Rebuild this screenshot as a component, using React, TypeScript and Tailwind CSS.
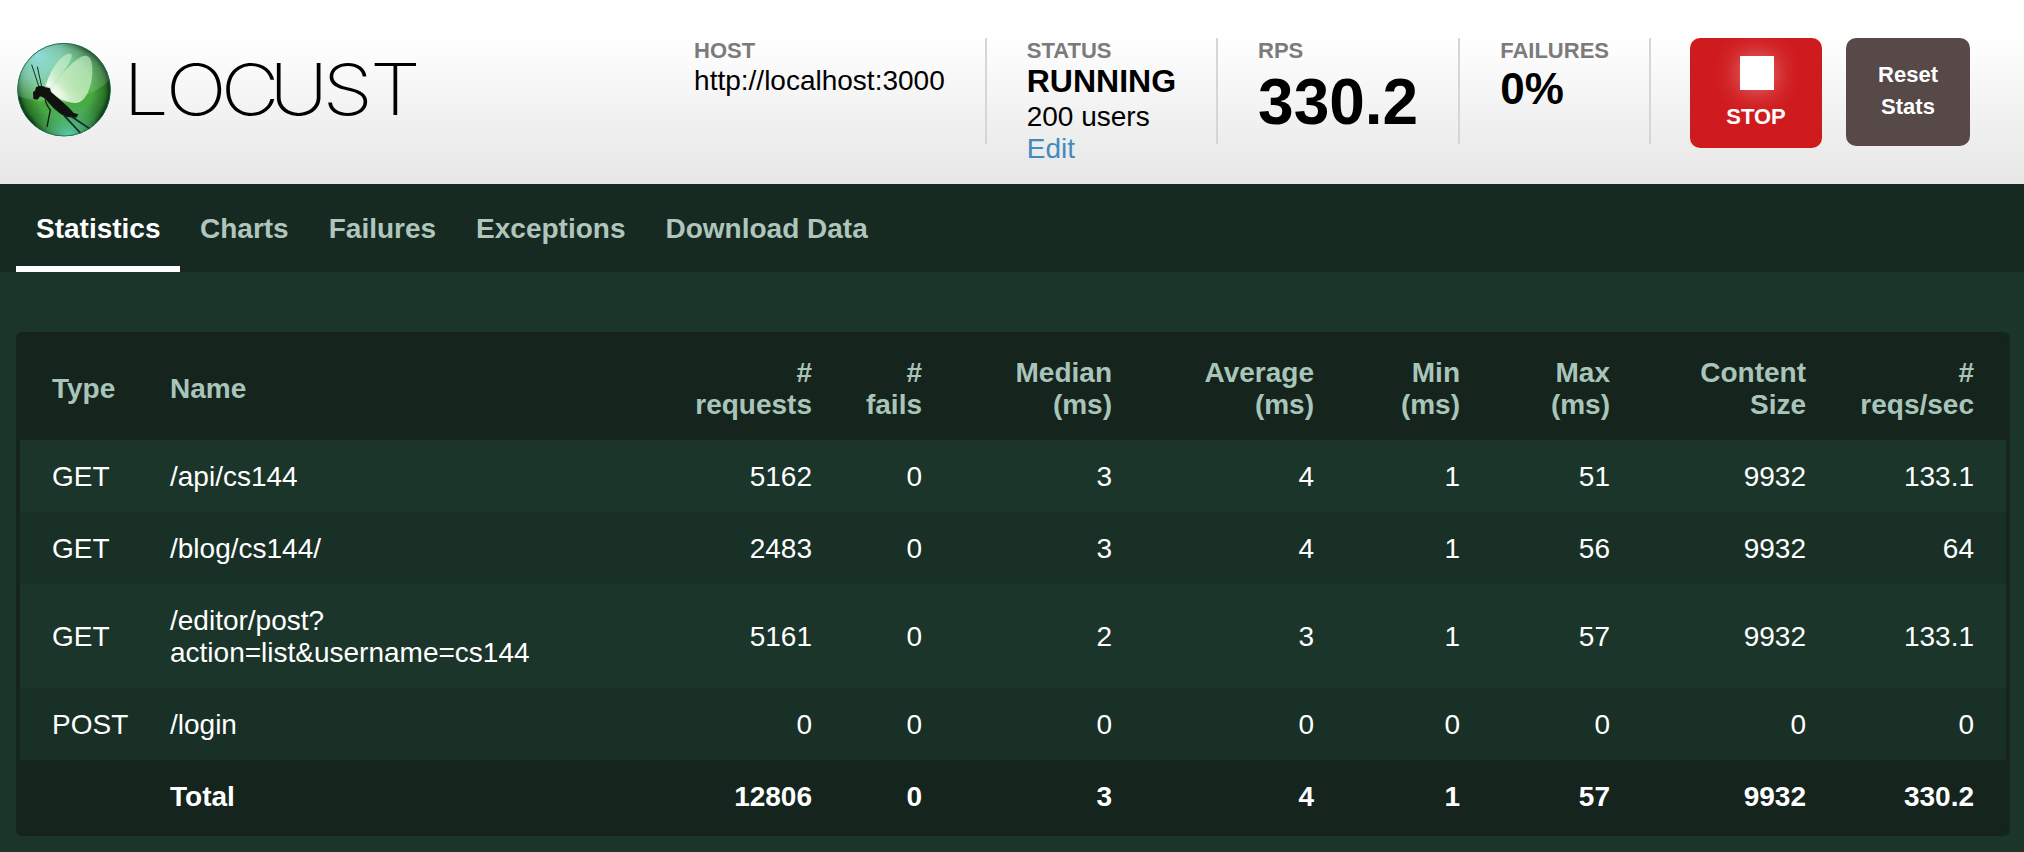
import type { ReactNode } from 'react'

type Row = { type: string; name: ReactNode; values: string[] }

const tabs = ['Statistics', 'Charts', 'Failures', 'Exceptions', 'Download Data']

const columns = [
  ['#', 'requests'],
  ['#', 'fails'],
  ['Median', '(ms)'],
  ['Average', '(ms)'],
  ['Min', '(ms)'],
  ['Max', '(ms)'],
  ['Content', 'Size'],
  ['#', 'reqs/sec'],
]

const rows: Row[] = [
  { type: 'GET', name: '/api/cs144', values: ['5162', '0', '3', '4', '1', '51', '9932', '133.1'] },
  { type: 'GET', name: '/blog/cs144/', values: ['2483', '0', '3', '4', '1', '56', '9932', '64'] },
  {
    type: 'GET',
    name: (
      <>
        /editor/post?
        <br />
        action=list&amp;username=cs144
      </>
    ),
    values: ['5161', '0', '2', '3', '1', '57', '9932', '133.1'],
  },
  { type: 'POST', name: '/login', values: ['0', '0', '0', '0', '0', '0', '0', '0'] },
]

const totals = ['12806', '0', '3', '4', '1', '57', '9932', '330.2']

function LocustMark() {
  return (
    <svg className="h-24 w-24 shrink-0" viewBox="18 18 288 288">
      <defs>
        <linearGradient id="base" x1="0.3" y1="0" x2="0.55" y2="1">
          <stop offset="0" stopColor="#7cc9b0" />
          <stop offset="0.3" stopColor="#63b873" />
          <stop offset="0.6" stopColor="#47a93a" />
          <stop offset="1" stopColor="#48a85e" />
        </linearGradient>
        <radialGradient id="shade" cx="0.5" cy="0.5" r="0.5">
          <stop offset="0.6" stopColor="#0b3a10" stopOpacity="0" />
          <stop offset="0.88" stopColor="#0a3a12" stopOpacity="0.5" />
          <stop offset="1" stopColor="#03200a" stopOpacity="0.95" />
        </radialGradient>
        <radialGradient id="sky" cx="0.22" cy="0.14" r="0.5">
          <stop offset="0" stopColor="#84d8dc" />
          <stop offset="0.5" stopColor="#7ccfb6" stopOpacity="0.75" />
          <stop offset="1" stopColor="#6cc080" stopOpacity="0" />
        </radialGradient>
        <radialGradient id="pool" cx="0.55" cy="1" r="0.42">
          <stop offset="0" stopColor="#63cdb4" />
          <stop offset="0.5" stopColor="#4fb56c" stopOpacity="0.7" />
          <stop offset="1" stopColor="#49b045" stopOpacity="0" />
        </radialGradient>
        <radialGradient id="glow" cx="0.5" cy="0.5" r="0.5">
          <stop offset="0" stopColor="#fff" />
          <stop offset="0.3" stopColor="#fff" stopOpacity="0.75" />
          <stop offset="1" stopColor="#fff" stopOpacity="0" />
        </radialGradient>
        <linearGradient id="wing" x1="0.1" y1="1" x2="0.9" y2="0.1">
          <stop offset="0" stopColor="#fff" stopOpacity="0.9" />
          <stop offset="0.45" stopColor="#d3f2ca" stopOpacity="0.78" />
          <stop offset="1" stopColor="#c4edc4" stopOpacity="0.65" />
        </linearGradient>
        <clipPath id="ball">
          <circle cx="162" cy="161" r="140" />
        </clipPath>
      </defs>
      <g clipPath="url(#ball)">
        <circle cx="162" cy="161" r="140" fill="url(#base)" />
        <circle cx="162" cy="161" r="140" fill="url(#shade)" />
        <circle cx="162" cy="161" r="140" fill="url(#sky)" />
        <circle cx="162" cy="161" r="140" fill="url(#pool)" />
        <path d="M15 176 Q90 206 170 192 Q258 178 302 128 V10 H15 Z" fill="#d5ffe0" fillOpacity="0.16" />
        <ellipse cx="138" cy="168" rx="50" ry="27" fill="url(#glow)" transform="rotate(38 138 168)" />
        <path d="M108 150 C114 116 148 58 175 53 C189 51 187 63 179 77 C165 103 142 132 122 154 Z" fill="url(#wing)" />
        <path d="M122 158 C148 120 184 78 214 62 C234 53 246 66 247 96 C248 150 228 203 195 201 C172 200 152 190 138 180 Z" fill="url(#wing)" />
        <path d="M88 156 L65 86 M95 152 L82 92" fill="none" stroke="#16302a" strokeWidth="3" />
        <path d="M70 189 L69 168 L75 164 L78 154 C86 149 99 149 106 154 L120 157 L123 168 C148 190 178 214 191 231 L205 235 L199 245 L172 243 C150 238 128 214 109 192 C101 184 94 180 89 182 L83 191 Z" fill="#101210" />
        <path d="M105 190 Q112 212 121 222 L111 273" fill="none" stroke="#161b16" strokeWidth="4" />
        <path d="M162 238 L214 294 M182 240 L242 280" fill="none" stroke="#14252f" strokeWidth="5" />
      </g>
      <circle cx="162" cy="161" r="139" fill="none" stroke="#16704e" strokeWidth="2.5" />
    </svg>
  )
}

function Box({ label, children }: { label: string; children: ReactNode }) {
  return (
    <div className="h-[106px] border-r-2 border-[#d6d6d6] px-10">
      <div className="h-6 pt-px text-[22px] font-bold leading-6 text-[#7b7b7b]">{label}</div>
      {children}
    </div>
  )
}

function NumberCell({ children, index }: { children: ReactNode; index: number }) {
  return (
    <td className={index === 7 ? 'pt-[21px] pb-[19px] pr-8 text-right' : 'pt-[21px] pb-[19px] text-right'}>
      {children}
    </td>
  )
}

export default function App() {
  return (
    <div className="flex h-[852px] w-[2024px] flex-col overflow-hidden bg-[#1b352a] font-['Liberation_Sans',Arial,sans-serif] text-[28px] leading-8">
      <header className="flex h-[184px] shrink-0 items-start bg-linear-to-b from-white from-20% to-[#e6e6e6] pl-4 pr-[54px] text-black">
        <div className="flex pt-[42px]">
          <LocustMark />
          <svg className="h-24 w-[310px]" viewBox="0 0 310 96">
            <text
              transform="scale(1.14 1)"
              y="73"
              x="9.8 47.1 95.3 138 184.6 226.3"
              className="fill-black font-['Inter',sans-serif] text-[71px] font-extralight"
            >
              LOCUST
            </text>
          </svg>
        </div>
        <div className="ml-auto flex items-start pt-[38px]">
          <Box label="HOST">
            <div className="pt-[3px]">http://localhost:3000</div>
          </Box>
          <Box label="STATUS">
            <div className="text-[32px] font-bold leading-[38px]">RUNNING</div>
            <div className="pt-px">200 users</div>
            <a className="block text-[#428bbf]">Edit</a>
          </Box>
          <Box label="RPS">
            <div className="pt-1 text-[64px] font-bold leading-[72px]">330.2</div>
          </Box>
          <Box label="FAILURES">
            <div className="pt-[3px] text-[44px] font-bold leading-[48px]">0%</div>
          </Box>
          <button className="ml-[39px] flex h-[110px] w-[132px] flex-col items-center rounded-[10px] bg-[#d01b1e] pt-[18px] text-[22px] font-bold leading-8 text-white">
            <span className="ml-0.5 h-[34px] w-[34px] bg-white shadow-[0_0_26px_rgba(255,255,255,0.45)]" />
            <span className="pt-[11px]">STOP</span>
          </button>
          <button className="ml-6 h-[108px] w-[124px] rounded-[10px] bg-[#584949] pb-0.5 text-[22px] font-bold leading-8 text-white">
            Reset
            <br />
            Stats
          </button>
        </div>
      </header>

      <nav className="flex h-[88px] shrink-0 bg-[#162a22] pl-4 font-bold">
        {tabs.map((tab, i) => (
          <a
            key={tab}
            className={
              i === 0
                ? 'w-[164px] border-b-[6px] border-white pl-5 pt-[29px] text-white'
                : 'border-b-[6px] border-transparent px-5 pt-[29px] text-[#b0c5bb]'
            }
          >
            {tab}
          </a>
        ))}
      </nav>

      <main className="px-4 pt-[60px]">
        <div className="w-[1994px] rounded-md border-4 border-[#15241d] bg-[#15241d]">
          <table className="w-[1986px] table-fixed border-collapse text-white">
            <colgroup>
              <col className="w-[150px]" />
              <col className="w-[400px]" />
              <col className="w-[242px]" />
              <col className="w-[110px]" />
              <col className="w-[190px]" />
              <col className="w-[202px]" />
              <col className="w-[146px]" />
              <col className="w-[150px]" />
              <col className="w-[196px]" />
              <col className="w-[200px]" />
            </colgroup>
            <thead className="text-[#a9c5ba]">
              <tr>
                <th className="pt-[21px] pb-[19px] pl-8 text-left">Type</th>
                <th className="pt-[21px] pb-[19px] text-left">Name</th>
                {columns.map(([top, bottom], i) => (
                  <th
                    key={i}
                    className={i === 7 ? 'pt-[21px] pb-[19px] pr-8 text-right' : 'pt-[21px] pb-[19px] text-right'}
                  >
                    {top}
                    <br />
                    {bottom}
                  </th>
                ))}
              </tr>
            </thead>
            <tbody>
              {rows.map((row, r) => (
                <tr key={r} className={r % 2 === 0 ? 'bg-[#1b352a]' : 'bg-[#193027]'}>
                  <td className="pt-[21px] pb-[19px] pl-8">{row.type}</td>
                  <td className="pt-[21px] pb-[19px]">{row.name}</td>
                  {row.values.map((value, i) => (
                    <NumberCell key={i} index={i}>
                      {value}
                    </NumberCell>
                  ))}
                </tr>
              ))}
              <tr className="font-bold">
                <td />
                <td className="pt-[21px] pb-[19px]">Total</td>
                {totals.map((value, i) => (
                  <NumberCell key={i} index={i}>
                    {value}
                  </NumberCell>
                ))}
              </tr>
            </tbody>
          </table>
        </div>
      </main>
    </div>
  )
}
